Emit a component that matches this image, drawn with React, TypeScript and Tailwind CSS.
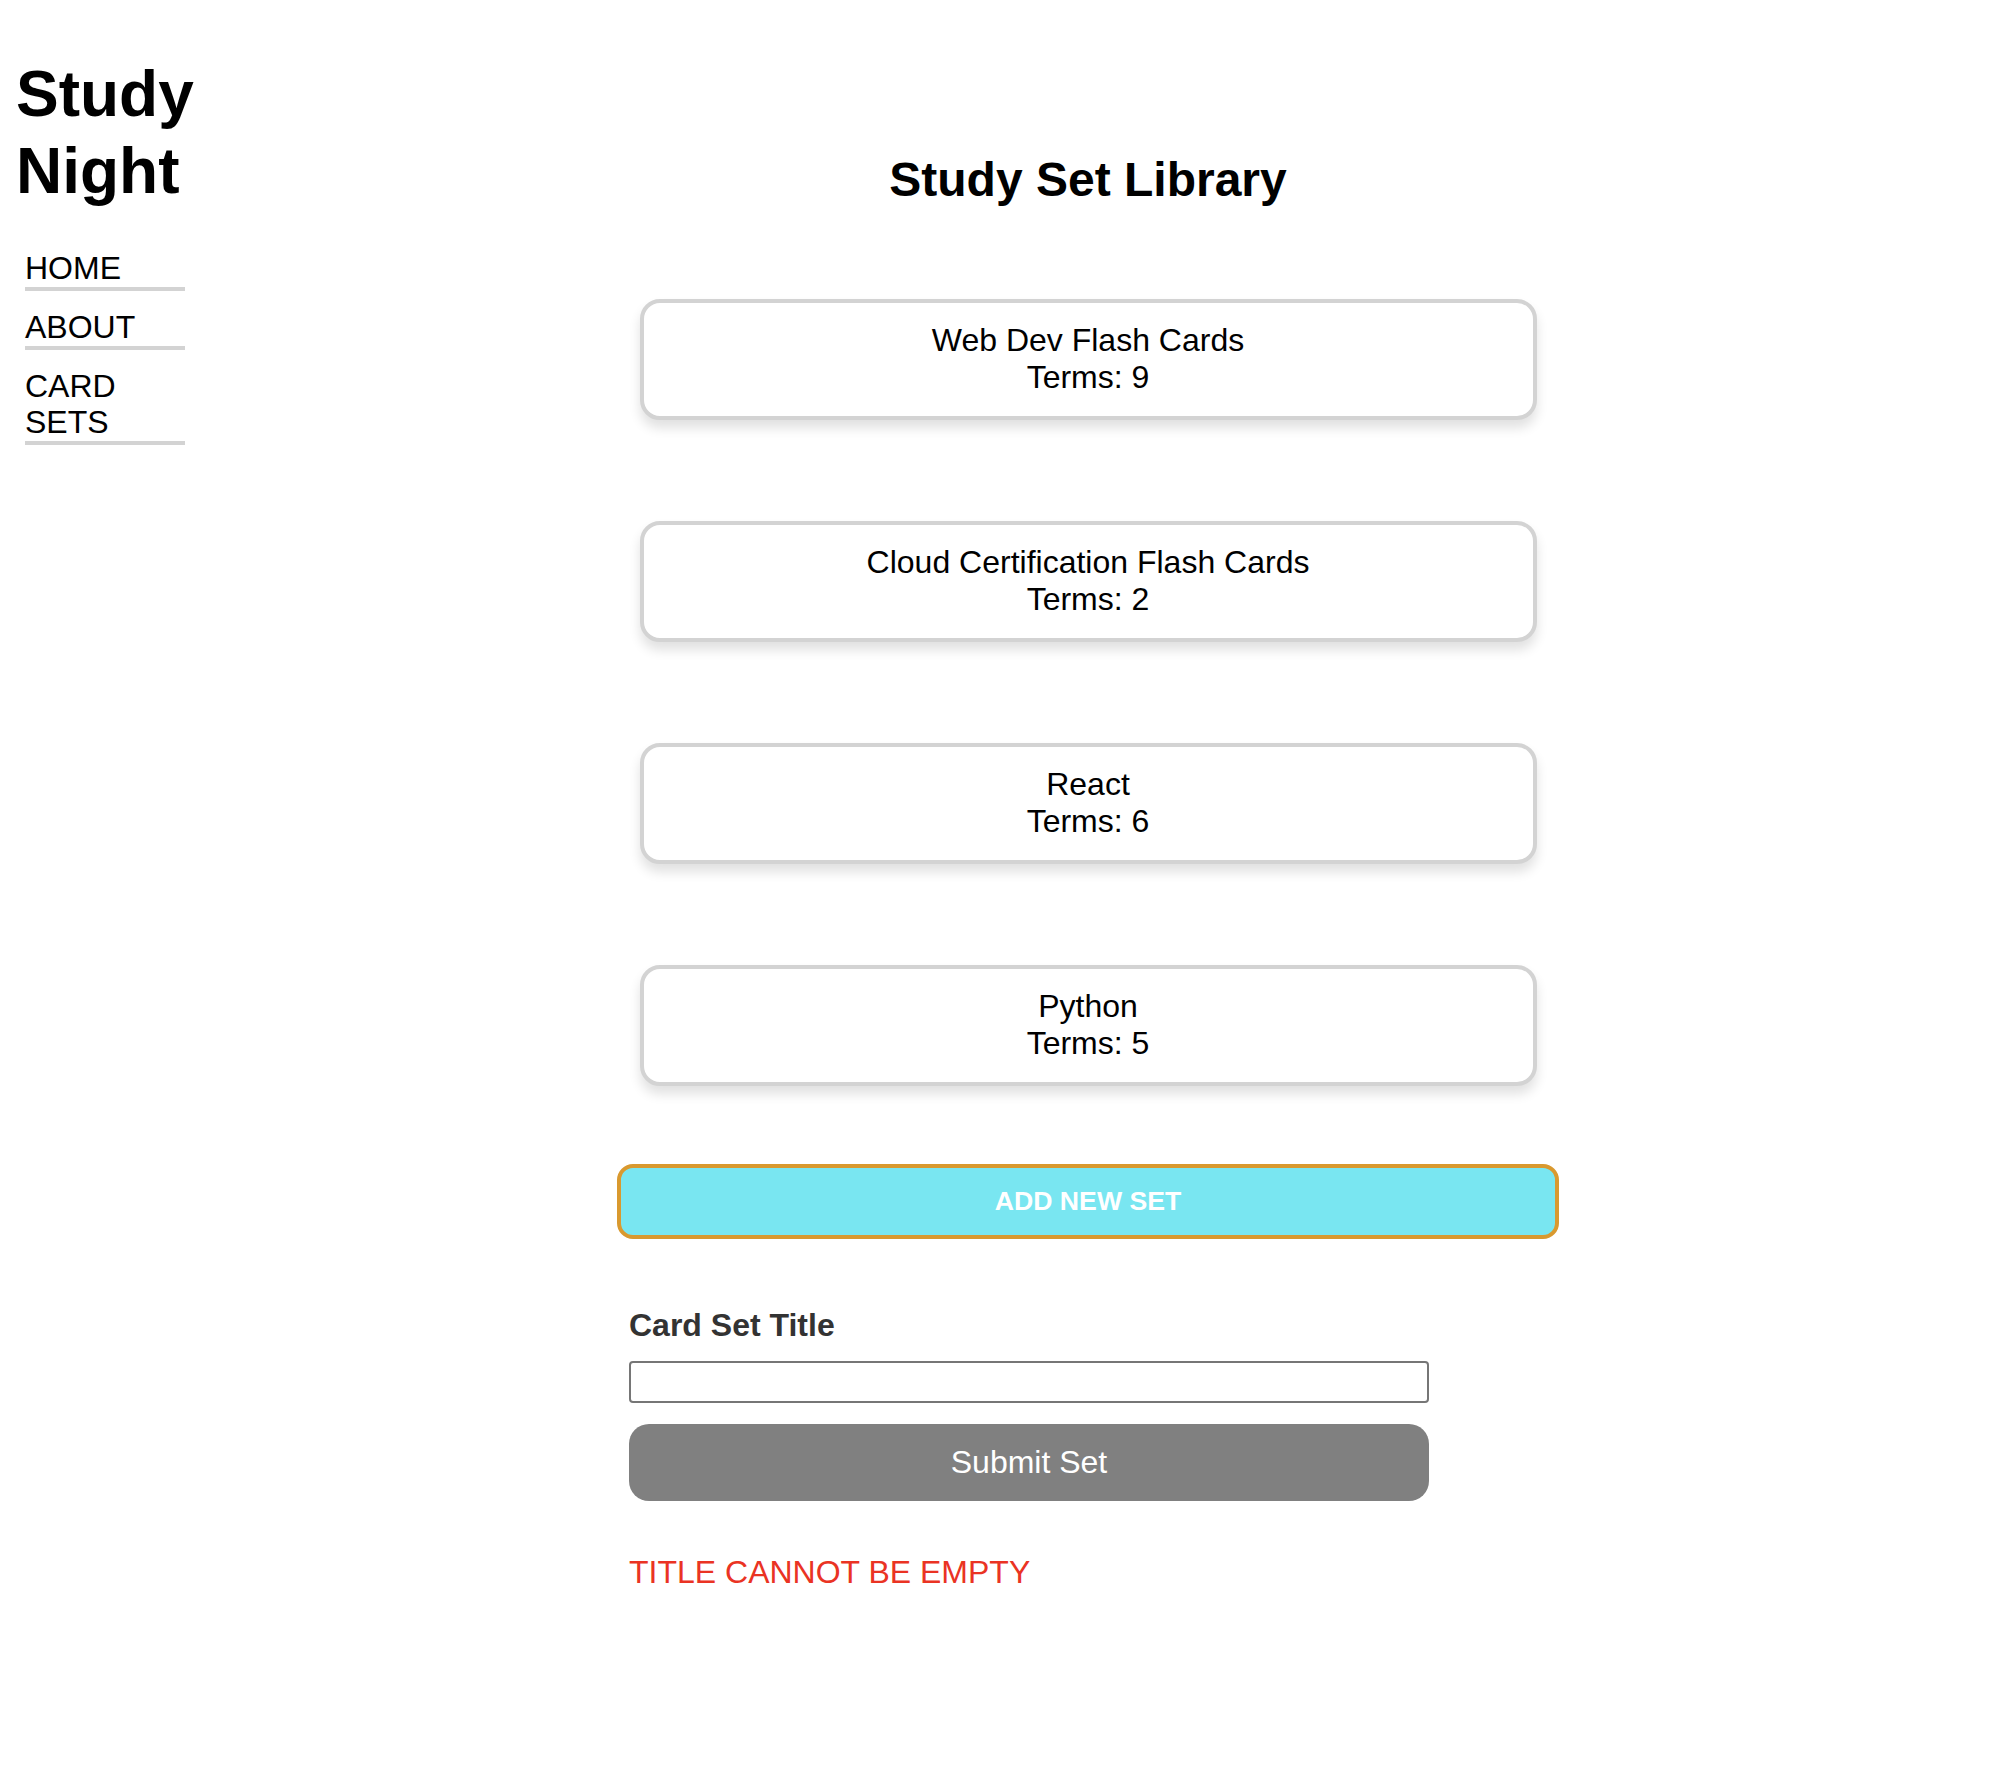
import { useState } from 'react';

interface CardSet {
  id: number;
  title: string;
  terms: number;
}

const initialSets: CardSet[] = [
  { id: 1, title: 'Web Dev Flash Cards', terms: 9 },
  { id: 2, title: 'Cloud Certification Flash Cards', terms: 2 },
  { id: 3, title: 'React', terms: 6 },
  { id: 4, title: 'Python', terms: 5 },
];

const navLinks = ['HOME', 'ABOUT', 'CARD SETS'];

export default function App() {
  const [sets] = useState<CardSet[]>(initialSets);
  const [title, setTitle] = useState('');
  const [error] = useState('TITLE CANNOT BE EMPTY');

  return (
    <div className="flex min-h-[1776px] bg-white font-['Liberation_Sans',Arial,sans-serif] text-black">
      {/* サイドバー */}
      <aside className="w-[192px] shrink-0 pl-4 pt-[56px]">
        <h1 className="text-[64px] font-bold leading-[77px]">Study Night</h1>
        <nav className="mt-[40px] flex flex-col gap-[18px] pl-[9px]">
          {navLinks.map((link) => (
            <a
              key={link}
              href="#"
              className="block w-[160px] border-b-4 border-[#d3d3d3] text-[32px] leading-[36.8px] text-black"
            >
              {link}
            </a>
          ))}
        </nav>
      </aside>

      {/* メイン */}
      <main className="flex-1 pr-4 pt-[152px]">
        <div className="mx-auto w-[942px]">
          <h2 className="text-center text-[48px] font-bold leading-[55px]">Study Set Library</h2>

          <div className="mt-[92px] flex flex-col items-center gap-[101.5px]">
            {sets.map((set) => (
              <div
                key={set.id}
                className="w-[897px] rounded-[20px] border-4 border-[#d3d3d3] bg-white pt-[19px] pb-[20px] text-center text-[32px] leading-[36.8px] shadow-[0_8px_12px_rgba(0,0,0,0.12)]"
              >
                <div>{set.title}</div>
                <div>Terms: {set.terms}</div>
              </div>
            ))}
          </div>

          <button className="mt-[78px] flex h-[75px] w-full items-center justify-center rounded-[16px] border-4 border-[#d9992f] bg-[#79e6f1] text-[26.67px] font-bold text-white">
            ADD NEW SET
          </button>

          <form className="mt-[68px] w-[812px] pl-3" onSubmit={(e) => e.preventDefault()}>
            <label className="block text-[32px] font-bold leading-[36.8px] text-[#333333]">Card Set Title</label>
            <input
              type="text"
              value={title}
              onChange={(e) => setTitle(e.target.value)}
              className="mt-[17px] block h-[42px] w-[800px] rounded-[4px] border-2 border-[#767676] bg-white px-2 text-[26px] outline-none"
            />
            <button
              type="submit"
              className="mt-[21px] block h-[77px] w-[800px] rounded-[20px] bg-[#808080] text-[32px] leading-[36.8px] text-white"
            >
              Submit Set
            </button>
            <p className="mt-[53px] text-[32px] leading-[36.8px] text-[#ea3323]">{error}</p>
          </form>
        </div>
      </main>
    </div>
  );
}
